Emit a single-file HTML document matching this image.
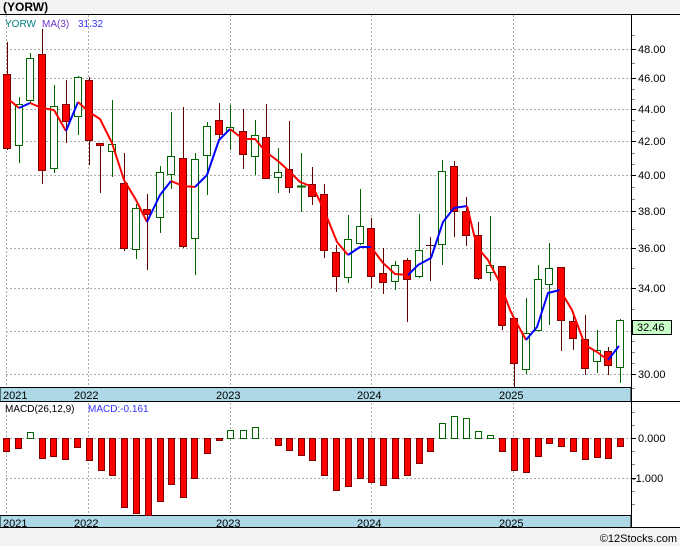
<!DOCTYPE html>
<html><head><meta charset="utf-8"><style>
body{margin:0;background:#f3f3f3;width:680px;height:546px;overflow:hidden;font-family:"Liberation Sans",sans-serif}
svg{display:block}
</style></head><body>
<svg width="680" height="546" xmlns="http://www.w3.org/2000/svg" font-family="Liberation Sans, sans-serif">
<rect x="0" y="0" width="680" height="546" fill="#f3f3f3"/>
<text x="3" y="11" font-size="12" font-weight="bold" fill="#000">(YORW)</text>
<rect x="0" y="14" width="680" height="513" fill="#fff"/>
<line x1="0" y1="14.5" x2="680" y2="14.5" stroke="#000"/>
<!-- grid price -->
<g stroke="#aaa" stroke-dasharray="2,2" stroke-width="1">
<line x1="6" y1="49.5" x2="631" y2="49.5"/><line x1="6" y1="78.5" x2="631" y2="78.5"/>
<line x1="6" y1="109.5" x2="631" y2="109.5"/><line x1="6" y1="141.5" x2="631" y2="141.5"/>
<line x1="6" y1="175.5" x2="631" y2="175.5"/><line x1="6" y1="211.5" x2="631" y2="211.5"/>
<line x1="6" y1="248.5" x2="631" y2="248.5"/><line x1="6" y1="288.5" x2="631" y2="288.5"/>
<line x1="6" y1="331.5" x2="631" y2="331.5"/><line x1="6" y1="374.5" x2="631" y2="374.5"/>
<line x1="6" y1="438.5" x2="631" y2="438.5"/><line x1="6" y1="478.5" x2="631" y2="478.5"/>
<line x1="88.5" y1="15" x2="88.5" y2="515"/><line x1="230.5" y1="15" x2="230.5" y2="515"/>
<line x1="371.5" y1="15" x2="371.5" y2="515"/><line x1="513.5" y1="15" x2="513.5" y2="515"/>
<line x1="6.5" y1="15" x2="6.5" y2="515"/>
</g>
<text x="5" y="27" font-size="10" fill="#008080">YORW</text>
<text x="42" y="27" font-size="10" fill="#6633cc">MA(3)</text>
<text x="78" y="27" font-size="10" fill="#3333ff">31.32</text>
<!-- candles -->
<g stroke-width="1">
<g stroke="#600000">
<line x1="7.5" y1="42" x2="7.5" y2="150"/><line x1="42.5" y1="29" x2="42.5" y2="184"/><line x1="66.5" y1="80" x2="66.5" y2="143"/><line x1="89.5" y1="77" x2="89.5" y2="165"/><line x1="100.5" y1="143" x2="100.5" y2="193"/><line x1="124.5" y1="153" x2="124.5" y2="251"/><line x1="147.5" y1="194" x2="147.5" y2="270"/><line x1="183.5" y1="107" x2="183.5" y2="248"/><line x1="219.5" y1="103" x2="219.5" y2="140"/><line x1="243.5" y1="109" x2="243.5" y2="169"/><line x1="266.5" y1="104" x2="266.5" y2="179"/><line x1="289.5" y1="121" x2="289.5" y2="193"/><line x1="312.5" y1="167" x2="312.5" y2="205"/><line x1="324.5" y1="184" x2="324.5" y2="258"/><line x1="336.5" y1="245" x2="336.5" y2="292"/><line x1="371.5" y1="218" x2="371.5" y2="288"/><line x1="383.5" y1="248" x2="383.5" y2="294"/><line x1="407.5" y1="258" x2="407.5" y2="322"/><line x1="430.5" y1="237" x2="430.5" y2="281"/><line x1="426" y1="245.5" x2="435" y2="245.5"/><line x1="454.5" y1="161" x2="454.5" y2="237"/><line x1="466.5" y1="197" x2="466.5" y2="246"/><line x1="478.5" y1="222" x2="478.5" y2="280"/><line x1="502.5" y1="266" x2="502.5" y2="330"/><line x1="514.5" y1="318" x2="514.5" y2="387"/><line x1="561.5" y1="267" x2="561.5" y2="351"/><line x1="573.5" y1="315" x2="573.5" y2="350"/><line x1="585.5" y1="315" x2="585.5" y2="375"/><line x1="608.5" y1="347" x2="608.5" y2="375"/>
</g>
<g stroke="#006400">
<line x1="19.5" y1="97" x2="19.5" y2="163"/><line x1="30.5" y1="53" x2="30.5" y2="104"/><line x1="54.5" y1="85" x2="54.5" y2="173"/><line x1="78.5" y1="76" x2="78.5" y2="135"/><line x1="112.5" y1="100" x2="112.5" y2="177"/><line x1="136.5" y1="204" x2="136.5" y2="259"/><line x1="160.5" y1="166" x2="160.5" y2="233"/><line x1="171.5" y1="112" x2="171.5" y2="189"/><line x1="195.5" y1="153" x2="195.5" y2="275"/><line x1="207.5" y1="122" x2="207.5" y2="195"/><line x1="230.5" y1="105" x2="230.5" y2="150"/><line x1="255.5" y1="120" x2="255.5" y2="175"/><line x1="278.5" y1="148" x2="278.5" y2="193"/><line x1="301.5" y1="153" x2="301.5" y2="212"/><line x1="297" y1="186.5" x2="306" y2="186.5" stroke-width="2"/><line x1="348.5" y1="215" x2="348.5" y2="283"/><line x1="360.5" y1="189" x2="360.5" y2="245"/><line x1="395.5" y1="261" x2="395.5" y2="290"/><line x1="419.5" y1="214" x2="419.5" y2="278"/><line x1="442.5" y1="160" x2="442.5" y2="265"/><line x1="490.5" y1="216" x2="490.5" y2="281"/><line x1="526.5" y1="298" x2="526.5" y2="374"/><line x1="538.5" y1="265" x2="538.5" y2="330"/><line x1="549.5" y1="243" x2="549.5" y2="325"/><line x1="597.5" y1="330" x2="597.5" y2="373"/><line x1="620.5" y1="319" x2="620.5" y2="383"/>
</g>
<g fill="#ff0000" stroke="#800000">
<rect x="3.5" y="74.5" width="7" height="74"/><rect x="38.5" y="54.5" width="7" height="116"/><rect x="62.5" y="104.5" width="7" height="17"/><rect x="85.5" y="80.5" width="7" height="60"/><rect x="96.5" y="143.5" width="7" height="2"/><rect x="120.5" y="183.5" width="7" height="65"/><rect x="143.5" y="209.5" width="7" height="5"/><rect x="179.5" y="158.5" width="7" height="88"/><rect x="215.5" y="120.5" width="7" height="14"/><rect x="239.5" y="131.5" width="7" height="23"/><rect x="262.5" y="137.5" width="7" height="41"/><rect x="285.5" y="169.5" width="7" height="18"/><rect x="308.5" y="184.5" width="7" height="12"/><rect x="320.5" y="194.5" width="7" height="56"/><rect x="332.5" y="252.5" width="7" height="24"/><rect x="367.5" y="228.5" width="7" height="48"/><rect x="379.5" y="273.5" width="7" height="9"/><rect x="403.5" y="260.5" width="7" height="19"/><rect x="450.5" y="166.5" width="7" height="45"/><rect x="462.5" y="211.5" width="7" height="24"/><rect x="474.5" y="235.5" width="7" height="43"/><rect x="498.5" y="266.5" width="7" height="59"/><rect x="510.5" y="318.5" width="7" height="45"/><rect x="557.5" y="267.5" width="7" height="53"/><rect x="569.5" y="321.5" width="7" height="17"/><rect x="581.5" y="339.5" width="7" height="29"/><rect x="604.5" y="351.5" width="7" height="14"/>
</g>
<g fill="#fff" stroke="#006400">
<rect x="15.5" y="104.5" width="7" height="41"/><rect x="26.5" y="58.5" width="7" height="42"/><rect x="50.5" y="106.5" width="7" height="62"/><rect x="74.5" y="77.5" width="7" height="39"/><rect x="108.5" y="144.5" width="7" height="7"/><rect x="132.5" y="208.5" width="7" height="41"/><rect x="156.5" y="172.5" width="7" height="45"/><rect x="167.5" y="156.5" width="7" height="18"/><rect x="191.5" y="159.5" width="7" height="79"/><rect x="203.5" y="126.5" width="7" height="29"/><rect x="226.5" y="127.5" width="7" height="3"/><rect x="251.5" y="135.5" width="7" height="21"/><rect x="274.5" y="172.5" width="7" height="5"/><rect x="344.5" y="239.5" width="7" height="38"/><rect x="356.5" y="226.5" width="7" height="17"/><rect x="391.5" y="265.5" width="7" height="16"/><rect x="415.5" y="250.5" width="7" height="26"/><rect x="438.5" y="171.5" width="7" height="73"/><rect x="486.5" y="265.5" width="7" height="7"/><rect x="522.5" y="333.5" width="7" height="36"/><rect x="534.5" y="279.5" width="7" height="51"/><rect x="545.5" y="268.5" width="7" height="16"/><rect x="593.5" y="350.5" width="7" height="11"/><rect x="616.5" y="320.5" width="7" height="47"/>
</g>
</g>
<!-- MA -->
<g fill="none" stroke-width="2" stroke-linejoin="round">
<path stroke="#ff0000" d="M7 98L19 108"/><path stroke="#0000ff" d="M19 108L30 103"/><path stroke="#ff0000" d="M30 103L42 108L54 110L66 131"/><path stroke="#0000ff" d="M66 131L78 102"/><path stroke="#ff0000" d="M78 102L89 112L100 119L112 143L124 180L136 200L147 222"/><path stroke="#0000ff" d="M147 222L160 195L171 181"/><path stroke="#ff0000" d="M171 181L183 186L195 187"/><path stroke="#0000ff" d="M195 187L207 175L219 140L230 129"/><path stroke="#ff0000" d="M230 129L243 139L255 139L266 152L278 161L289 171L300 182L313 187L324 210L337 242L348 255"/><path stroke="#0000ff" d="M348 255L360 247L371 247"/><path stroke="#ff0000" d="M371 247L383 263L395 274L408 275"/><path stroke="#0000ff" d="M408 275L418 265L431 258L443 222L454 208L467 206"/><path stroke="#ff0000" d="M467 206L477 247L488 260L500 283L510 310L514 318L526 340"/><path stroke="#0000ff" d="M526 340L537 327L548 293L560 290"/><path stroke="#ff0000" d="M560 290L572 310L585 345L597 352L608 360"/><path stroke="#0000ff" d="M608 360L619 346"/>
</g>
<!-- price axis -->
<line x1="631.5" y1="14" x2="631.5" y2="527" stroke="#000"/>
<g stroke="#000">
<line x1="632" y1="49.5" x2="636" y2="49.5"/><line x1="632" y1="78.5" x2="636" y2="78.5"/><line x1="632" y1="109.5" x2="636" y2="109.5"/><line x1="632" y1="141.5" x2="636" y2="141.5"/><line x1="632" y1="175.5" x2="636" y2="175.5"/><line x1="632" y1="211.5" x2="636" y2="211.5"/><line x1="632" y1="248.5" x2="636" y2="248.5"/><line x1="632" y1="288.5" x2="636" y2="288.5"/><line x1="632" y1="374.5" x2="636" y2="374.5"/>
</g>
<g stroke="#888">
<line x1="632" y1="35.5" x2="635" y2="35.5"/><line x1="632" y1="63.5" x2="635" y2="63.5"/><line x1="632" y1="89.5" x2="635" y2="89.5"/><line x1="632" y1="99.5" x2="635" y2="99.5"/><line x1="632" y1="120.5" x2="635" y2="120.5"/><line x1="632" y1="131.5" x2="635" y2="131.5"/><line x1="632" y1="153.5" x2="635" y2="153.5"/><line x1="632" y1="164.5" x2="635" y2="164.5"/><line x1="632" y1="187.5" x2="635" y2="187.5"/><line x1="632" y1="199.5" x2="635" y2="199.5"/><line x1="632" y1="229.5" x2="635" y2="229.5"/><line x1="632" y1="268.5" x2="635" y2="268.5"/><line x1="632" y1="309.5" x2="635" y2="309.5"/><line x1="632" y1="341.5" x2="635" y2="341.5"/><line x1="632" y1="352.5" x2="635" y2="352.5"/><line x1="632" y1="363.5" x2="635" y2="363.5"/><line x1="632" y1="388.5" x2="635" y2="388.5"/>
<line x1="632" y1="412.5" x2="635" y2="412.5"/><line x1="632" y1="425.5" x2="635" y2="425.5"/><line x1="632" y1="451.5" x2="635" y2="451.5"/><line x1="632" y1="464.5" x2="635" y2="464.5"/><line x1="632" y1="491.5" x2="635" y2="491.5"/><line x1="632" y1="504.5" x2="635" y2="504.5"/>
<line x1="632" y1="438.5" x2="636" y2="438.5" stroke="#000"/><line x1="632" y1="478.5" x2="636" y2="478.5" stroke="#000"/>
</g>
<g font-size="11" fill="#000">
<text x="638" y="53">48.00</text><text x="638" y="82">46.00</text><text x="638" y="113">44.00</text><text x="638" y="145">42.00</text><text x="638" y="179">40.00</text><text x="638" y="215">38.00</text><text x="638" y="252">36.00</text><text x="638" y="292">34.00</text><text x="638" y="378">30.00</text>
<text x="638" y="442">0.000</text><text x="632" y="482">-1.000</text>
</g>
<rect x="632.5" y="320.5" width="39" height="14" fill="#c8ffc8" stroke="#000"/>
<text x="637" y="331" font-size="11">32.46</text>
<!-- date strips -->
<rect x="0" y="387.5" width="631" height="14" fill="#add8e6" stroke="#000"/>
<rect x="0" y="515.5" width="631" height="12" fill="#add8e6" stroke="#000"/>
<line x1="631" y1="401.5" x2="680" y2="401.5" stroke="#000"/>
<line x1="0" y1="527.5" x2="680" y2="527.5" stroke="#000"/>
<g font-size="11" fill="#000">
<text x="3" y="399">2021</text><text x="74" y="399">2022</text><text x="216" y="399">2023</text><text x="357" y="399">2024</text><text x="499" y="399">2025</text>
<text x="3" y="527">2021</text><text x="74" y="527">2022</text><text x="216" y="527">2023</text><text x="357" y="527">2024</text><text x="499" y="527">2025</text>
</g>
<text x="5" y="412" font-size="10" fill="#000">MACD(26,12,9)</text>
<text x="88" y="412" font-size="10" fill="#3333ff">MACD:-0.161</text>
<!-- MACD bars -->
<g fill="#ff0000" stroke="#800000">
<rect x="3.5" y="438.5" width="6" height="13"/><rect x="15.5" y="438.5" width="6" height="10"/><rect x="39.5" y="438.5" width="6" height="20"/><rect x="50.5" y="438.5" width="6" height="18"/><rect x="62.5" y="438.5" width="6" height="21"/><rect x="74.5" y="438.5" width="6" height="9"/><rect x="86.5" y="438.5" width="6" height="22"/><rect x="98.5" y="438.5" width="6" height="32"/><rect x="109.5" y="438.5" width="6" height="37"/><rect x="121.5" y="438.5" width="6" height="69"/><rect x="133.5" y="438.5" width="6" height="75"/><rect x="145.5" y="438.5" width="6" height="77"/><rect x="157.5" y="438.5" width="6" height="63"/><rect x="168.5" y="438.5" width="6" height="46"/><rect x="180.5" y="438.5" width="6" height="59"/><rect x="191.5" y="438.5" width="6" height="40"/><rect x="204.5" y="438.5" width="6" height="15"/><rect x="216.5" y="438.5" width="6" height="2"/><rect x="275.5" y="438.5" width="6" height="7"/><rect x="286.5" y="438.5" width="6" height="12"/><rect x="298.5" y="438.5" width="6" height="17"/><rect x="309.5" y="438.5" width="6" height="22"/><rect x="321.5" y="438.5" width="6" height="37"/><rect x="333.5" y="438.5" width="6" height="52"/><rect x="345.5" y="438.5" width="6" height="48"/><rect x="357.5" y="438.5" width="6" height="40"/><rect x="368.5" y="438.5" width="6" height="44"/><rect x="380.5" y="438.5" width="6" height="47"/><rect x="392.5" y="438.5" width="6" height="40"/><rect x="404.5" y="438.5" width="6" height="37"/><rect x="416.5" y="438.5" width="6" height="25"/><rect x="427.5" y="438.5" width="6" height="13"/><rect x="499.5" y="438.5" width="6" height="13"/><rect x="511.5" y="438.5" width="6" height="32"/><rect x="523.5" y="438.5" width="6" height="34"/><rect x="535.5" y="438.5" width="6" height="18"/><rect x="546.5" y="438.5" width="6" height="5"/><rect x="558.5" y="438.5" width="6" height="8"/><rect x="570.5" y="438.5" width="6" height="13"/><rect x="582.5" y="438.5" width="6" height="21"/><rect x="594.5" y="438.5" width="6" height="19"/><rect x="605.5" y="438.5" width="6" height="20"/><rect x="617.5" y="438.5" width="6" height="8"/>
</g>
<g fill="#fff" stroke="#006400">
<rect x="27.5" y="432.5" width="6" height="6"/><rect x="227.5" y="430.5" width="6" height="8"/><rect x="240.5" y="430.5" width="6" height="8"/><rect x="252.5" y="427.5" width="6" height="11"/><rect x="439.5" y="423.5" width="6" height="15"/><rect x="451.5" y="416.5" width="6" height="22"/><rect x="463.5" y="418.5" width="6" height="20"/><rect x="475.5" y="431.5" width="6" height="7"/><rect x="487.5" y="435.5" width="6" height="3"/>
</g>
<text x="677" y="542" font-size="11" fill="#000" text-anchor="end">©12Stocks.com</text>
</svg>
</body></html>
